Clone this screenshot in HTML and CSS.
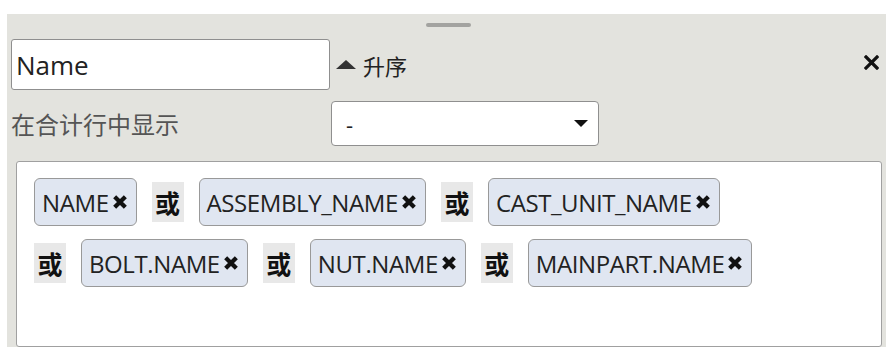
FILE: index.html
```html
<!DOCTYPE html>
<html lang="zh-CN">
<head>
    <meta charset="UTF-8">
    <title>排序与分组</title>
    <link rel="stylesheet" href="styles.css">
</head>
<body>
    <div class="panel">
        <div class="handle"></div>

        <div class="row sort-row">
            <input class="field-input" type="text" value="Name">
            <span class="sort-toggle"><span class="sort-arrow"></span>升序</span>
            <svg class="close-btn" width="15" height="15" viewBox="0 0 15 15">
                <path d="M2 2 L13 13 M13 2 L2 13" stroke="#111" stroke-width="3.2" stroke-linecap="square"/>
            </svg>
        </div>

        <div class="row total-row">
            <span class="total-label">在合计行中显示</span>
            <div class="select-box">
                <span>-</span>
                <span class="select-arrow"></span>
            </div>
        </div>

        <div class="tag-box">
            <span class="tag">NAME<svg class="tag-x" viewBox="0 0 12 12"><path d="M2 2 L10 10 M10 2 L2 10"/></svg></span>
            <span class="group">
                <span class="or">或</span>
                <span class="tag">ASSEMBLY_NAME<svg class="tag-x" viewBox="0 0 12 12"><path d="M2 2 L10 10 M10 2 L2 10"/></svg></span>
            </span>
            <span class="group">
                <span class="or">或</span>
                <span class="tag">CAST_UNIT_NAME<svg class="tag-x" viewBox="0 0 12 12"><path d="M2 2 L10 10 M10 2 L2 10"/></svg></span>
            </span>
            <span class="group">
                <span class="or">或</span>
                <span class="tag">BOLT.NAME<svg class="tag-x" viewBox="0 0 12 12"><path d="M2 2 L10 10 M10 2 L2 10"/></svg></span>
            </span>
            <span class="group">
                <span class="or">或</span>
                <span class="tag">NUT.NAME<svg class="tag-x" viewBox="0 0 12 12"><path d="M2 2 L10 10 M10 2 L2 10"/></svg></span>
            </span>
            <span class="group">
                <span class="or">或</span>
                <span class="tag">MAINPART.NAME<svg class="tag-x" viewBox="0 0 12 12"><path d="M2 2 L10 10 M10 2 L2 10"/></svg></span>
            </span>
        </div>
    </div>
</body>
</html>
```

FILE: styles.css
```css
html, body { margin: 0; background: #fff; overflow: hidden; }
body { font-family: "Open Sans", "Noto Sans CJK SC", sans-serif; color: #222; }

.panel {
    margin: 14px 0 0 7px;
    height: 333px;
    padding: 9px 0 0 4px;
    box-sizing: border-box;
    background: #e3e3de;
}
.handle { width: 45px; height: 4px; margin: 0 auto; border-radius: 2px; background: #a3a3a0; }

.row { display: flex; align-items: center; }
.sort-row { margin-top: 12px; }
.field-input {
    width: 319px;
    height: 51px;
    box-sizing: border-box;
    margin: 0;
    padding: 0 4px;
    border: 1px solid #8f8f8f;
    border-radius: 3px;
    background: #fff;
    font-family: "Open Sans", sans-serif;
    font-size: 26px;
    color: #222;
    outline: none;
}
.sort-toggle {
    display: flex;
    align-items: center;
    margin-left: 6px;
    font-family: "Noto Sans CJK SC", sans-serif;
    font-size: 22px;
    color: #222;
}
.sort-arrow {
    width: 0;
    height: 0;
    margin-right: 7px;
    border-left: 10px solid transparent;
    border-right: 10px solid transparent;
    border-bottom: 9px solid #333;
}
.close-btn { margin-left: auto; margin-right: 7px; margin-top: -4px; }

.total-row { margin-top: 11px; }
.total-label {
    width: 320px;
    font-family: "Noto Sans CJK SC", sans-serif;
    font-size: 24px;
    color: #555;
}
.select-box {
    display: flex;
    align-items: center;
    justify-content: space-between;
    width: 268px;
    height: 45px;
    box-sizing: border-box;
    padding: 0 10px 0 14px;
    border: 1px solid #8f8f8f;
    border-radius: 4px;
    background: #fff;
    font-size: 22px;
}
.select-arrow {
    width: 0;
    height: 0;
    border-left: 7px solid transparent;
    border-right: 7px solid transparent;
    border-top: 7px solid #111;
}

.tag-box {
    display: flex;
    flex-wrap: wrap;
    align-items: center;
    align-content: flex-start;
    gap: 13px 15px;
    width: 866px;
    height: 186px;
    box-sizing: border-box;
    margin: 15px 0 0 5px;
    padding: 16px 17px;
    border: 1px solid #a0a0a0;
    border-radius: 3px;
    background: #fff;
}
.group { display: flex; align-items: center; gap: 15px; }
.tag {
    display: flex;
    align-items: center;
    height: 48px;
    box-sizing: border-box;
    padding: 0 8px 0 7px;
    border: 1px solid #999;
    border-radius: 6px;
    background: #e0e6f1;
    font-size: 24px;
    letter-spacing: -0.4px;
    color: #222;
}
.tag-x { width: 16px; height: 16px; margin-left: 3px; }
.tag-x path { stroke: #111; stroke-width: 3.2; fill: none; }
.or {
    display: flex;
    align-items: center;
    justify-content: center;
    width: 32px;
    height: 40px;
    background: #e8e8e8;
    font-family: "Noto Sans CJK SC", sans-serif;
    font-weight: 700;
    font-size: 25px;
    color: #111;
}
```
